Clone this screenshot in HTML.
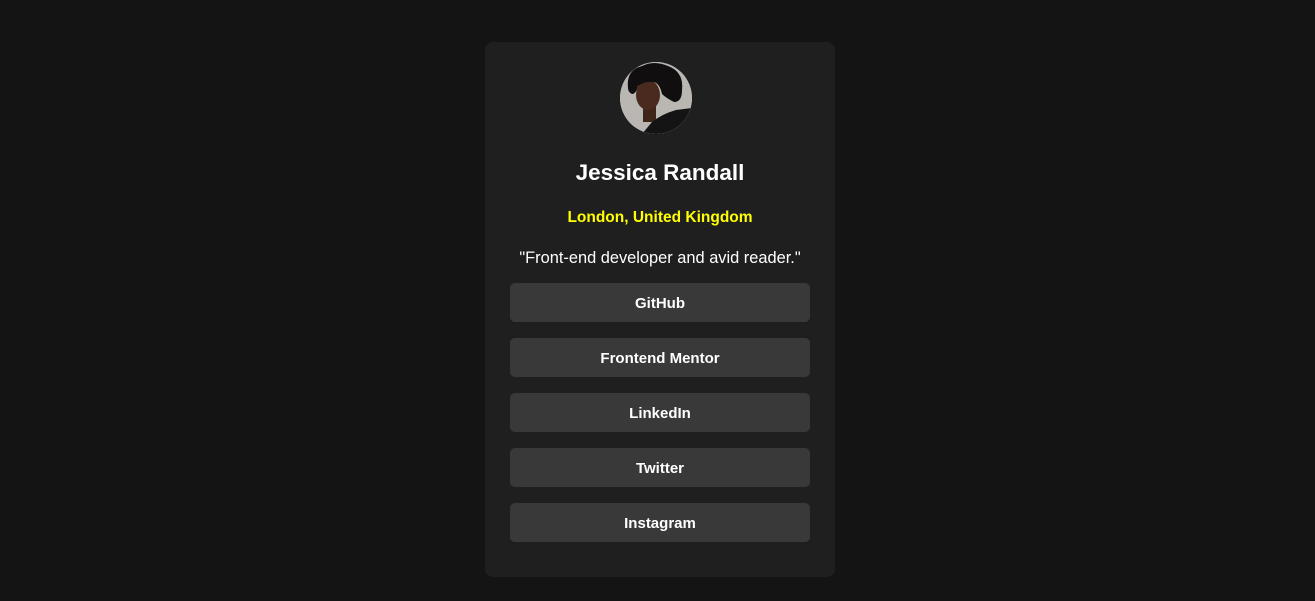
<!DOCTYPE html>
<html><head><meta charset="utf-8"><style>
html,body{margin:0;padding:0;background:#141414;width:1315px;height:601px;overflow:hidden;font-family:"Liberation Sans",sans-serif;}
.card{position:absolute;left:485px;top:42px;width:350px;height:535px;background:#1f1f1f;border-radius:8px;}
.av{position:absolute;left:135px;top:20px;width:72px;height:72px;border-radius:50%;overflow:hidden;background:#b9b6b2;}
.name{position:absolute;top:118px;left:0;width:100%;text-align:center;color:#fff;font-weight:bold;font-size:22.5px;}
.loc{position:absolute;top:167px;left:0;width:100%;text-align:center;color:#ffff00;font-weight:bold;font-size:15.5px;}
.quote{position:absolute;top:207px;left:0;width:100%;text-align:center;color:#fff;font-size:16.4px;}
.btn{position:absolute;left:25px;width:300px;height:39px;background:#3a393a;border-radius:5px;color:#fff;font-weight:bold;font-size:15px;text-align:center;line-height:41px;}
</style></head><body>
<div class="card">
<div class="av"><svg width="72" height="72" viewBox="0 0 72 72">
<rect width="72" height="72" fill="#bab7b3"/>
<rect x="23" y="40" width="13" height="20" fill="#3f2419"/>
<ellipse cx="28" cy="33" rx="12" ry="15" fill="#4a2a1e"/>
<path d="M8 26 Q6 8 22 4 Q34 -2 48 4 Q64 10 62 28 Q62 40 54 40 Q46 36 42 32 Q40 22 34 20 Q24 19 18 24 Q16 32 12 32 Q8 30 8 26Z" fill="#100e0e"/>
<path d="M22 72 L32 60 Q42 52 56 48 L72 46 L72 72Z" fill="#151414"/>
</svg></div>
<div class="name">Jessica Randall</div>
<div class="loc">London, United Kingdom</div>
<div class="quote">"Front-end developer and avid reader."</div>
<div class="btn" style="top:241px">GitHub</div>
<div class="btn" style="top:296px">Frontend Mentor</div>
<div class="btn" style="top:351px">LinkedIn</div>
<div class="btn" style="top:406px">Twitter</div>
<div class="btn" style="top:461px">Instagram</div>
</div>
</body></html>
